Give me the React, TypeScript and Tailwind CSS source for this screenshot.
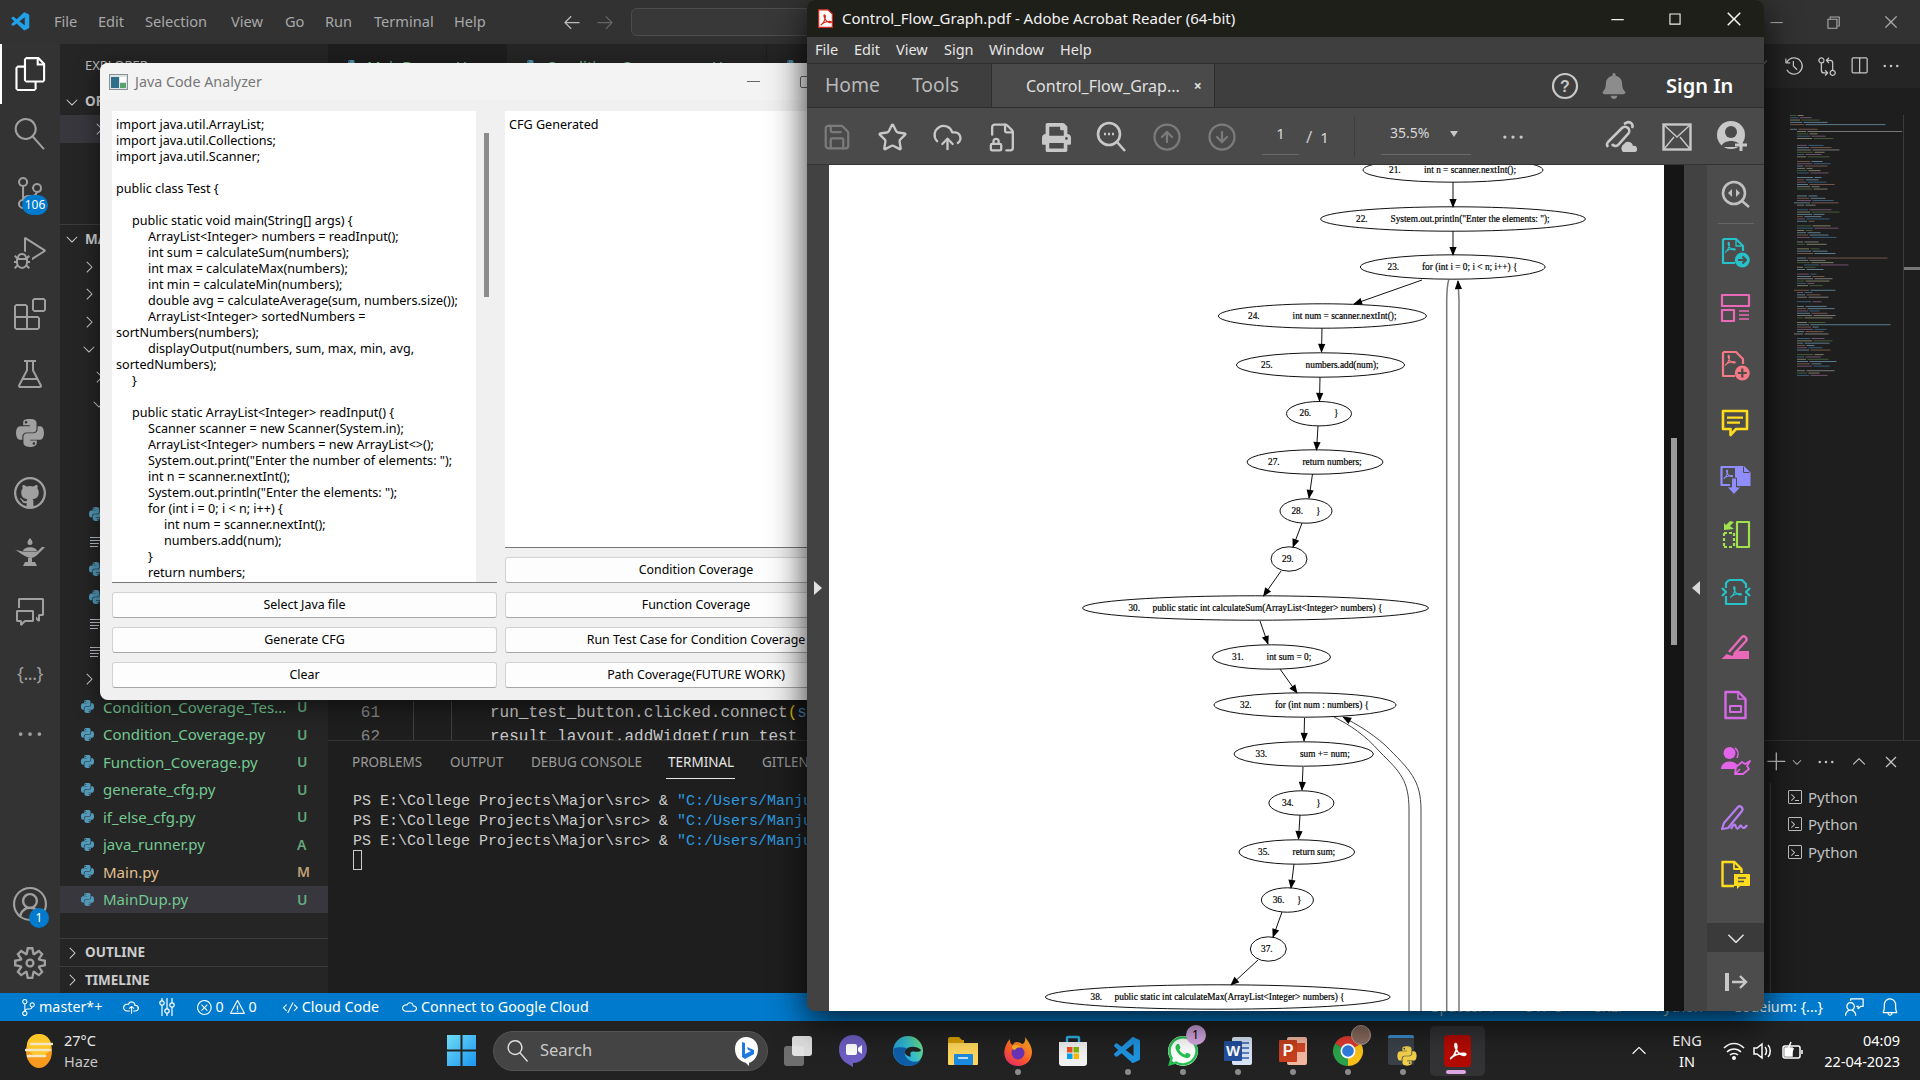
import type { ReactNode } from "react";
import {
  VscAccount, VscAdd, VscArrowLeft, VscArrowRight, VscBeaker, VscBell, VscChevronDown, VscChevronRight, VscChevronUp,
  VscChromeClose, VscChromeMaximize, VscChromeMinimize, VscChromeRestore, VscCheck, VscClose, VscCloud, VscCloudUpload, VscCode,
  VscCommentDiscussion, VscDebugAlt, VscEllipsis, VscError, VscExtensions, VscFeedback, VscFiles, VscGitCompare,
  VscGithub, VscHistory, VscListFlat, VscSearch, VscSettingsGear, VscSourceControl, VscSplitHorizontal,
  VscTerminal, VscVscode, VscWarning,
} from "react-icons/vsc";
import { FaBell, FaPrint, FaPython, FaWhatsapp } from "react-icons/fa";
import { CircleArrowDown, CircleArrowUp, CloudUpload, FileLock2, Save, Star } from "lucide-react";

const swoosh = "M4.5 19.5c2.5-1.5 5-6 6-10.5.4-2 .2-5-1-5s-1 3 0 5c1.5 3.5 5 7 8 7.5 1.5.3 3 0 3-1s-3-1.2-6-.7c-3 .5-7 2-9.5 4.2-1 1-1.2 1.8-.5.5z";

const javaLines: [number, string][] = [
  [0, "import java.util.ArrayList;"],
  [0, "import java.util.Collections;"],
  [0, "import java.util.Scanner;"],
  [0, " "],
  [0, "public class Test {"],
  [0, " "],
  [1, "public static void main(String[] args) {"],
  [2, "ArrayList<Integer> numbers = readInput();"],
  [2, "int sum = calculateSum(numbers);"],
  [2, "int max = calculateMax(numbers);"],
  [2, "int min = calculateMin(numbers);"],
  [2, "double avg = calculateAverage(sum, numbers.size());"],
  [2, "ArrayList<Integer> sortedNumbers ="],
  [0, "sortNumbers(numbers);"],
  [2, "displayOutput(numbers, sum, max, min, avg,"],
  [0, "sortedNumbers);"],
  [1, "}"],
  [0, " "],
  [1, "public static ArrayList<Integer> readInput() {"],
  [2, "Scanner scanner = new Scanner(System.in);"],
  [2, "ArrayList<Integer> numbers = new ArrayList<>();"],
  [2, 'System.out.print("Enter the number of elements: ");'],
  [2, "int n = scanner.nextInt();"],
  [2, 'System.out.println("Enter the elements: ");'],
  [2, "for (int i = 0; i < n; i++) {"],
  [3, "int num = scanner.nextInt();"],
  [3, "numbers.add(num);"],
  [2, "}"],
  [2, "return numbers;"],
];

// n, cx, cy, rx, numX, textX, text
const nodes: [number, number, number, number, number, number, string][] = [
  [21, 1453, 170, 90, 1389, 1424, "int n = scanner.nextInt();"],
  [22, 1453, 219, 132.4, 1356, 1390.5, 'System.out.println("Enter the elements: ");'],
  [23, 1452.7, 267, 92.4, 1387.5, 1422, "for (int i = 0; i < n; i++) {"],
  [24, 1322.4, 316, 104, 1248, 1292.6, "int num = scanner.nextInt();"],
  [25, 1320.5, 365, 84, 1261, 1305.6, "numbers.add(num);"],
  [26, 1319, 413.7, 32.5, 1299.5, 1334, "}"],
  [27, 1315, 462, 68, 1268, 1302.5, "return numbers;"],
  [28, 1306, 511, 26, 1291.4, 1316, "}"],
  [29, 1289, 559, 18, 1282, 1300, ""],
  [30, 1255.5, 608, 173, 1128.4, 1152.5, "public static int calculateSum(ArrayList<Integer> numbers) {"],
  [31, 1271.5, 657, 59, 1232, 1266.6, "int sum = 0;"],
  [32, 1305, 705, 91, 1240, 1275, "for (int num : numbers) {"],
  [33, 1303.7, 754, 69.7, 1255.5, 1300, "sum += num;"],
  [34, 1301.4, 803, 32.5, 1282, 1316.3, "}"],
  [35, 1296.8, 852, 57.8, 1258, 1292.6, "return sum;"],
  [36, 1287.4, 900, 26, 1272.7, 1297, "}"],
  [37, 1268.3, 949, 18, 1261, 1280, ""],
  [38, 1217.8, 997, 172.4, 1090.5, 1114.6, "public static int calculateMax(ArrayList<Integer> numbers) {"],
];

const edges: [number, number, number, number][] = [
  [1453, 182, 1453, 207], [1453, 231, 1453, 255], [1422, 280, 1354, 304], [1322, 328, 1321.5, 352],
  [1320, 377, 1319.5, 401], [1318, 426, 1316.5, 450], [1312.5, 474, 1309, 498], [1302, 523, 1293, 547],
  [1281, 571, 1263.5, 596], [1260, 621, 1268, 644], [1280, 669, 1297, 693], [1304.5, 718, 1304, 741],
  [1303, 767, 1302, 790], [1300, 815, 1298.5, 839], [1294, 864, 1291, 888], [1282, 912, 1273, 937], [1258, 960, 1231, 985],
];

const files: [string, string, string][] = [
  ["Condition_Coverage_Tes...", "U", "text-[#73c991]"],
  ["Condition_Coverage.py", "U", "text-[#73c991]"],
  ["Function_Coverage.py", "U", "text-[#73c991]"],
  ["generate_cfg.py", "U", "text-[#73c991]"],
  ["if_else_cfg.py", "U", "text-[#73c991]"],
  ["java_runner.py", "A", "text-[#73c991]"],
  ["Main.py", "M", "text-[#e2c08d]"],
  ["MainDup.py", "U", "text-[#73c991]"],
];

const treeRows = ["chev", "chev", "chev", "down", "chev2", "down2", "", "", "", "py", "list", "py", "py", "list", "list", "chev"];

function TreeRow({ kind }: { kind: string }) {
  return (
    <div className="h-[27.5px] flex items-center shrink-0">
      {kind === "chev" ? <VscChevronRight className="ml-[20px] text-[#ccc]" size={18} /> : null}
      {kind === "down" ? <VscChevronDown className="ml-[20px] text-[#ccc]" size={18} /> : null}
      {kind === "chev2" ? <VscChevronRight className="ml-[30px] text-[#ccc]" size={18} /> : null}
      {kind === "down2" ? <VscChevronDown className="ml-[30px] text-[#ccc]" size={18} /> : null}
      {kind === "py" ? <FaPython className="ml-[28px] text-[#519aba]" size={16} /> : null}
      {kind === "list" ? <VscListFlat className="ml-[28px] text-[#b8c0c8]" size={16} /> : null}
    </div>
  );
}

function Activity({ h, active, badge, children }: { h: string; active?: boolean; badge?: string; children: ReactNode }) {
  return (
    <div className={`${h} relative flex items-center justify-center text-[#a0a0a0] shrink-0 ${active ? "border-l-2 border-white text-white" : ""}`}>
      {children}
      {badge === "106" ? (
        <span className="absolute left-[22px] bottom-[8px] w-[26px] h-[20px] rounded-full bg-[#007acc] text-white text-[12px] leading-[20px] text-center">106</span>
      ) : null}
      {badge === "1" ? (
        <span className="absolute left-[29px] bottom-[5px] w-[20px] h-[20px] rounded-full bg-[#007acc] text-white text-[12px] leading-[20px] text-center">1</span>
      ) : null}
    </div>
  );
}

function Minimap() {
  const colors = ["#6a9955", "#569cd6", "#dcdcaa", "#9cdcfe", "#ce9178", "#c586c0", "#9cdcfe", "#d4d4d4"];
  const rows = [];
  for (let i = 0; i < 114; i++) {
    if (i % 7 === 5 || i % 23 === 11) continue;
    const indent = i < 7 ? 0 : i % 19 === 0 ? 4 : i % 31 === 3 ? 14 : 7;
    const w1 = 6 + ((i * 13) % 11);
    const w2 = 6 + ((i * 29) % 23);
    rows.push(
      <g key={i} opacity={0.55}>
        <rect x={indent} y={i * 2.3} width={w1} height={0.9} fill={colors[i % 8]} />
        <rect x={indent + w1 + 1.5} y={i * 2.3} width={i === 7 ? 95 : i % 29 === 4 ? 80 : w2} height={0.9} fill={colors[(i * 3 + 2) % 8]} />
      </g>
    );
  }
  return (
    <svg width="112" height="265" viewBox="0 0 112 265" className="block">
      {rows}
    </svg>
  );
}

function Btn({ children, w }: { children: string; w: string }) {
  return (
    <div className={`${w} h-[26px] shrink-0 bg-[#fdfdfd] border border-[#d2d2d2] border-b-[#a8a8a8] rounded-[3px] flex items-center justify-center text-[12.4px] text-black whitespace-nowrap`}>
      {children}
    </div>
  );
}

function ToolIcon({ children }: { children: ReactNode }) {
  return (
    <div className="h-[56.6px] flex items-center justify-center shrink-0">
      <svg width="32" height="32" viewBox="0 0 32 32" fill="none" strokeWidth="2.2" strokeLinejoin="round">
        {children}
      </svg>
    </div>
  );
}

function Taskbar({ dot, active, children }: { dot?: boolean; active?: boolean; children: ReactNode }) {
  return (
    <div className={`relative w-[55px] h-[50px] flex items-center justify-center shrink-0 rounded-[5px] ${active ? "bg-[#333336]" : ""}`}>
      {children}
      {dot ? <span className="absolute bottom-[1px] left-[25px] w-[6px] h-[6px] rounded-full bg-[#8b8b8b]" /> : null}
      {active ? <span className="absolute bottom-[2px] left-[16px] w-[20px] h-[4px] rounded-full bg-[#dca6e2]" /> : null}
    </div>
  );
}

export default function App() {
  return (
    <div className="relative w-[1920px] h-[1080px] overflow-hidden flex flex-col bg-[#1e1e1e] font-['Noto_Sans',sans-serif]">
      {/* vs code title bar */}
      <div className="h-[44px] shrink-0 bg-[#323233] flex items-center text-[14.6px] text-[#a8a8a8]">
        <VscVscode className="ml-[10px] text-[#23a0ea]" size={22} />
        <span className="ml-[22px] w-[44px]">File</span>
        <span className="w-[47px]">Edit</span>
        <span className="w-[86px]">Selection</span>
        <span className="w-[54px]">View</span>
        <span className="w-[40px]">Go</span>
        <span className="w-[49px]">Run</span>
        <span className="w-[80px]">Terminal</span>
        <span className="w-[106px]">Help</span>
        <VscArrowLeft className="text-[#bbb] ml-[2px]" size={20} />
        <VscArrowRight className="text-[#666] ml-[13px]" size={20} />
        <div className="ml-[16px] w-[520px] h-[28px] rounded-[6px] border border-[#4d4d4d] bg-[#383838]" />
        <div className="ml-auto flex items-center text-[#aaa]">
          <VscChromeMinimize size={18} className="mr-[39px]" />
          <VscChromeRestore size={18} className="mr-[40px]" />
          <VscChromeClose size={18} className="mr-[20px]" />
        </div>
      </div>

      <div className="flex-1 flex min-h-0">
        {/* activity bar */}
        <div className="w-[60px] shrink-0 bg-[#333333] flex flex-col">
          <Activity h="h-[60px]" active><VscFiles size={34} /></Activity>
          <Activity h="h-[59px]"><VscSearch size={32} className="-scale-x-100" /></Activity>
          <Activity h="h-[60px]" badge="106"><VscSourceControl size={32} /></Activity>
          <Activity h="h-[60px]"><VscDebugAlt size={32} /></Activity>
          <Activity h="h-[61px]"><VscExtensions size={32} /></Activity>
          <Activity h="h-[59px]"><VscBeaker size={32} /></Activity>
          <Activity h="h-[60px]"><FaPython size={32} /></Activity>
          <Activity h="h-[60px]"><VscGithub size={32} /></Activity>
          <Activity h="h-[59px]">
            <svg width="34" height="32" viewBox="0 0 34 32" fill="currentColor">
              <path d="M17 1c1.500 2 2.500 3 2.500 4.500a2.500 2.500 0 0 1-5 0C14.500 4 15.500 3 17 1z" />
              <path d="M10 14c1-5 13-5 14 0z" />
              <path d="M2 13c4 1 7 6 15 8 6 0 9-5 15-11h-3c-2 2-3 3-5 4.500H10C8 14.500 5 13 2 13z" />
              <path d="M15 21h4v4h-4zM12 25h10l2 4H10z" />
            </svg>
          </Activity>
          <Activity h="h-[60px]"><VscCommentDiscussion size={32} className="-scale-x-100" /></Activity>
          <Activity h="h-[62px]"><span className="text-[18px] tracking-tight">{"{...}"}</span></Activity>
          <Activity h="h-[59px]"><VscEllipsis size={30} /></Activity>
          <div className="flex-1" />
          <Activity h="h-[58px]" badge="1"><VscAccount size={34} /></Activity>
          <Activity h="h-[60px]"><VscSettingsGear size={32} /></Activity>
        </div>

        {/* sidebar */}
        <div className="w-[268px] shrink-0 bg-[#252526] flex flex-col text-[15px]">
          <div className="h-[44px] shrink-0 flex items-center pl-[25px] text-[13px] text-[#bbb]">EXPLORER</div>
          <div className="h-[27px] shrink-0 flex items-center pl-[3px] font-bold text-[13.5px] text-[#ccc]">
            <VscChevronDown size={18} /><span className="ml-[4px]">OPEN EDITORS</span>
          </div>
          <div className="h-[28px] shrink-0 flex items-center bg-[#37373d]"><VscChevronRight size={18} className="ml-[30px] text-[#ccc]" /></div>
          <div className="h-[82px] shrink-0 border-b border-[#3c3c3c]" />
          <div className="h-[28px] shrink-0 flex items-center pl-[3px] font-bold text-[13.5px] text-[#ccc]">
            <VscChevronDown size={18} /><span className="ml-[4px]">MAJOR</span>
          </div>
          {treeRows.map((kind, i) => <TreeRow key={i} kind={kind} />)}
          {files.map(([name, badge, color]) => (
            <div key={name} className={`h-[27.5px] shrink-0 flex items-center ${name === "MainDup.py" ? "bg-[#37373d]" : ""}`}>
              <FaPython className="ml-[20px] text-[#519aba]" size={15} />
              <span className={`ml-[8px] w-[194px] truncate ${color}`}>{name}</span>
              <span className={`font-semibold text-[14px] opacity-80 ${color}`}>{badge}</span>
            </div>
          ))}
          <div className="flex-1" />
          <div className="h-[28px] shrink-0 border-t border-[#3c3c3c] flex items-center pl-[3px] font-bold text-[13.5px] text-[#ccc]">
            <VscChevronRight size={18} /><span className="ml-[4px]">OUTLINE</span>
          </div>
          <div className="h-[27px] shrink-0 border-t border-[#3c3c3c] flex items-center pl-[3px] font-bold text-[13.5px] text-[#ccc]">
            <VscChevronRight size={18} /><span className="ml-[4px]">TIMELINE</span>
          </div>
        </div>

        {/* editor + panel */}
        <div className="flex-1 min-w-0 flex flex-col">
          <div className="h-[44px] shrink-0 bg-[#252526] flex text-[15px]">
            <div className="w-[178px] bg-[#1e1e1e] flex items-center pl-[16px] gap-[8px] text-[#73c991]">
              <FaPython className="text-[#519aba]" size={15} />MainDup.py U
            </div>
            <div className="w-[260px] flex items-center pl-[16px] gap-[8px] text-[#73c991] border-l border-[#1e1e1e]">
              <FaPython className="text-[#519aba]" size={15} />Condition_Coverage.py U
            </div>
            <div className="w-[200px] flex items-center pl-[16px] gap-[8px] text-[#e2c08d] border-l border-[#1e1e1e]">
              <FaPython className="text-[#519aba]" size={15} />Main.py
            </div>
            <div className="ml-auto flex items-center text-[#c5c5c5] pr-[19px]">
              <VscCheck size={18} className="mr-[15px] text-[#777]" />
              <VscHistory size={20} className="mr-[13px]" />
              <VscGitCompare size={20} className="mr-[12px]" />
              <VscSplitHorizontal size={20} className="mr-[12px]" />
              <VscEllipsis size={20} />
            </div>
          </div>
          <div className="h-[652px] shrink-0 flex bg-[#1e1e1e] overflow-hidden">
            <div className="flex-1 min-w-0 flex flex-col justify-end font-['Liberation_Mono',monospace] text-[16px] leading-[24px] text-[#c8c8c8]">
              <div className="flex h-[24px] whitespace-nowrap translate-y-[9px]">
                <span className="w-[52px] text-right text-[#858585]">61</span>
                <span className="ml-[33px] w-[38px] border-l border-[#404040] h-[24px]" />
                <span className="border-l border-[#404040] pl-[38px]">
                  run_test_button.clicked.connect<span className="text-[#ffd700]">(</span><span className="text-[#569cd6]">self.run_test)</span>
                </span>
              </div>
              <div className="flex h-[24px] whitespace-nowrap translate-y-[9px]">
                <span className="w-[52px] text-right text-[#858585]">62</span>
                <span className="ml-[33px] w-[38px] border-l border-[#404040] h-[24px]" />
                <span className="border-l border-[#404040] pl-[38px]">result_layout.addWidget(run_test_button)</span>
              </div>
            </div>
            <div className="w-[113px] shrink-0 pt-[27px]">
              <Minimap />
            </div>
            <div className="w-[17px] shrink-0 border-l border-[#3c3c3c] mt-[27px]">
              <div className="mt-[152px] h-[3px] bg-[#777]" />
            </div>
          </div>

          {/* panel */}
          <div className="flex-1 min-h-0 border-t border-[#333] bg-[#1e1e1e] flex flex-col">
            <div className="h-[42px] shrink-0 flex items-center text-[13.5px] text-[#9a9a9a] whitespace-nowrap">
              <span className="ml-[24px] w-[98px]">PROBLEMS</span>
              <span className="w-[81px]">OUTPUT</span>
              <span className="w-[137px]">DEBUG CONSOLE</span>
              <span className="w-[94px] h-[42px] leading-[42px] relative text-[#e7e7e7]">
                TERMINAL
                <span className="absolute left-[-2px] top-[37px] w-[69px] h-px bg-[#e7e7e7]" />
              </span>
              <span>GITLENS</span>
              <div className="ml-auto flex items-center text-[#c5c5c5] pr-[19px]">
                <VscAdd size={22} className="mr-[2px]" />
                <VscChevronDown size={14} className="mr-[12px]" />
                <VscEllipsis size={20} className="mr-[13px]" />
                <VscChevronUp size={20} className="mr-[12px]" />
                <VscClose size={20} />
              </div>
            </div>
            <div className="flex-1 min-h-0 flex">
              <div className="flex-1 min-w-0 pl-[25px] pt-[9px] font-['Liberation_Mono',monospace] text-[15px] leading-[20px] text-[#cccccc] whitespace-nowrap overflow-hidden">
                <div>PS E:\College Projects\Major\src&gt; &amp; <span className="text-[#2c9be0]">"C:/Users/Manjunath/AppData/Local/Programs/Python/Python310/python.exe"</span></div>
                <div>PS E:\College Projects\Major\src&gt; &amp; <span className="text-[#2c9be0]">"C:/Users/Manjunath/AppData/Local/Programs/Python/Python310/python.exe"</span></div>
                <div>PS E:\College Projects\Major\src&gt; &amp; <span className="text-[#2c9be0]">"C:/Users/Manjunath/AppData/Local/Programs/Python/Python310/python.exe"</span></div>
                <div className="w-[9px] h-[20px] -mt-[2px] border border-[#ccc]" />
              </div>
              <div className="w-[150px] shrink-0 border-l border-[#3c3c3c] pl-[16px] text-[15px] text-[#c0c0c0]">
                <div className="h-[27.5px] flex items-center gap-[5px]"><VscTerminal size={16} />Python</div>
                <div className="h-[27.5px] flex items-center gap-[5px]"><VscTerminal size={16} />Python</div>
                <div className="h-[27.5px] flex items-center gap-[5px]"><VscTerminal size={16} />Python</div>
              </div>
            </div>
          </div>
        </div>
      </div>

      {/* status bar */}
      <div className="h-[28px] shrink-0 bg-[#007acc] flex items-center text-white text-[14.3px] whitespace-nowrap">
        <VscSourceControl size={17} className="ml-[20px]" /><span className="ml-[2px]">master*+</span>
        <VscCloudUpload size={18} className="ml-[20px]" />
        <svg width="18" height="20" viewBox="0 0 18 20" fill="none" stroke="#fff" strokeWidth="1.2" className="ml-[18px]">
          <path d="M4 1v18M9 1v18M14 1v18" /><circle cx="4" cy="6" r="2.200" fill="#007acc" /><circle cx="9" cy="14" r="2.200" fill="#007acc" /><circle cx="14" cy="8" r="2.200" fill="#007acc" />
        </svg>
        <VscError size={17} className="ml-[20px]" /><span className="ml-[2px]">0</span>
        <VscWarning size={17} className="ml-[5px]" /><span className="ml-[3px]">0</span>
        <VscCode size={17} className="ml-[25px]" /><span className="ml-[3px]">Cloud Code</span>
        <VscCloud size={17} className="ml-[22px]" /><span className="ml-[3px]">Connect to Google Cloud</span>
        <div className="ml-auto flex items-center pr-[20px]">
          <span className="mr-[30px] text-[#c8e0f0]">Spaces: 4</span>
          <span className="mr-[30px] text-[#c8e0f0]">UTF-8</span>
          <span className="mr-[30px] text-[#c8e0f0]">CRLF</span>
          <span className="mr-[30px] text-[#c8e0f0]">Python</span>
          <span className="mr-[22px]">Codeium: {"{...}"}</span>
          <VscFeedback size={20} className="mr-[15px]" />
          <VscBell size={20} />
        </div>
      </div>

      {/* windows taskbar */}
      <div className="h-[59px] shrink-0 bg-[#222222] flex items-center text-white">
        <div className="w-[447px] shrink-0 flex items-center">
          <svg width="28" height="36" viewBox="0 0 28 36" className="ml-[25px]">
            <ellipse cx="14" cy="18" rx="13" ry="17" fill="#f79a1e" />
            <ellipse cx="14" cy="12" rx="12" ry="11" fill="#ffc629" />
            <g stroke="#f3e6c4" strokeWidth="2.6" strokeLinecap="round"><path d="M6 11h21M1 17h24M3 23h17" /></g>
          </svg>
          <div className="ml-[11px] text-[14.5px] leading-[21px] text-[#e8e8e8]">
            <div>27°C</div><div className="text-[#c8c8c8]">Haze</div>
          </div>
        </div>
        <svg width="29" height="31" viewBox="0 0 29 31" className="shrink-0">
          <defs><linearGradient id="win" x1="0" y1="0" x2="1" y2="1"><stop offset="0" stopColor="#6fdcf5" /><stop offset="1" stopColor="#1a95f0" /></linearGradient></defs>
          <path d="M0 0h13.5v14.5H0zM15.5 0H29v14.5H15.500zM0 16.5h13.5V31H0zM15.5 16.5H29V31H15.500z" fill="url(#win)" />
        </svg>
        <div className="ml-[17px] w-[275px] h-[40px] shrink-0 rounded-full bg-[#444444] border border-[#555] flex items-center">
          <VscSearch size={22} className="ml-[13px] -scale-x-100 text-[#ddd]" />
          <span className="ml-[11px] text-[16.5px] text-[#c8c8c8]">Search</span>
          <svg width="26" height="32" viewBox="0 0 26 32" className="ml-auto mr-[8px]">
            <path d="M13 2C6 2 2 8 2 14c0 7 4 12 11 14l3 3v-3c6-2 9-8 9-14C25 7 20 2 13 2z" fill="#fff" />
            <path d="M9 7l3 1v11l6-3-3-1-1-3 7 3v4l-9 5-3-2z" fill="#1f7ae0" />
          </svg>
        </div>
        <div className="ml-[2px] flex items-center">
          <Taskbar>
            <div className="relative w-[28px] h-[30px]">
              <div className="absolute left-0 bottom-0 w-[20px] h-[20px] rounded-[3px] bg-[#6f6f6f]" />
              <div className="absolute right-0 top-0 w-[20px] h-[20px] rounded-[3px] bg-[#f2f2f2] opacity-90" />
            </div>
          </Taskbar>
          <Taskbar>
            <svg width="30" height="34" viewBox="0 0 30 34">
              <path d="M15 1C7 1 1 7 1 15c0 7 3 12 9 15l5 3v-4c8 0 14-6 14-14S23 1 15 1z" fill="#6d5fc4" />
              <rect x="8" y="10" width="11" height="11" rx="2" fill="#fff" /><path d="M20 14l4-3v9l-4-3z" fill="#fff" />
            </svg>
          </Taskbar>
          <Taskbar>
            <svg width="32" height="32" viewBox="0 0 32 32">
              <defs>
                <linearGradient id="edge" x1="0" y1="0.7" x2="1" y2="0.2"><stop offset="0" stopColor="#1f90d8" /><stop offset="0.55" stopColor="#35bfd0" /><stop offset="1" stopColor="#6fe07a" /></linearGradient>
              </defs>
              <circle cx="16" cy="16" r="15" fill="url(#edge)" />
              <path d="M1.500 14c-1 10 6.500 17 15.500 17 5 0 9-2 12-6-5 3-12 2-15-3-2-3-1-7 1-9-5-1-12-1-13.500 1z" fill="#0f5ea8" />
              <path d="M13 16c2-5 11-6 16-1 0 3-6 1-9 1.500-2 .5-2 3-1 5-3 0-7-2-6-5.500z" fill="#222" />
            </svg>
          </Taskbar>
          <Taskbar>
            <svg width="32" height="30" viewBox="0 0 32 30">
              <path d="M1 3a2 2 0 0 1 2-2h9l3 3h2v6H1z" fill="#d9a200" />
              <path d="M1 7h30v21a1 1 0 0 1-1 1H2a1 1 0 0 1-1-1z" fill="#ffd75e" />
              <rect x="7" y="18" width="19" height="11" rx="1" fill="#1c8be0" /><rect x="11" y="21" width="10" height="2" fill="#bfe0f7" />
            </svg>
          </Taskbar>
          <Taskbar dot>
            <svg width="30" height="32" viewBox="0 0 30 32">
              <defs><linearGradient id="fx" x1="0.8" y1="0" x2="0.2" y2="1"><stop offset="0" stopColor="#ffb21f" /><stop offset="0.6" stopColor="#ff5a2a" /><stop offset="1" stopColor="#e22a6b" /></linearGradient></defs>
              <path d="M2 13c-3 10 4 18 13 18s14-7 14-14c0-6-4-11-7-15 1 5-2 7-3 7-2-2-6-3-8-1-1 1-1 2-1 2-3-1-3-4-3-6-2 2-4 5-5 9z" fill="url(#fx)" />
              <circle cx="15" cy="18" r="6.500" fill="#6b34b8" />
              <path d="M9 11c3-2 8-1 9 2-3-1-5 0-6 2-2 0-3-2-3-4z" fill="#ffb21f" />
            </svg>
          </Taskbar>
          <Taskbar>
            <svg width="30" height="32" viewBox="0 0 30 32">
              <path d="M9 8V3a1 1 0 0 1 1-1h10a1 1 0 0 1 1 1v5" fill="none" stroke="#2fb2e8" strokeWidth="2.4" />
              <path d="M1 7h28v21a3 3 0 0 1-3 3H4a3 3 0 0 1-3-3z" fill="#f2f2f2" />
              <rect x="9" y="12" width="5.500" height="5.500" fill="#f25022" /><rect x="15.500" y="12" width="5.500" height="5.500" fill="#7fba00" />
              <rect x="9" y="18.500" width="5.500" height="5.500" fill="#00a4ef" /><rect x="15.500" y="18.500" width="5.500" height="5.500" fill="#ffb900" />
            </svg>
          </Taskbar>
          <Taskbar dot><VscVscode size={32} className="text-[#1f93e0]" /></Taskbar>
          <Taskbar dot>
            <div className="relative">
              <div className="w-[30px] h-[30px] rounded-full bg-white flex items-center justify-center"><FaWhatsapp size={34} className="text-[#25c350] shrink-0" /></div>
              <span className="absolute -right-[8px] -top-[11px] w-[20px] h-[20px] rounded-full bg-[#d7a9e3] text-black text-[12px] leading-[20px] text-center">1</span>
            </div>
          </Taskbar>
          <Taskbar dot>
            <svg width="30" height="30" viewBox="0 0 30 30">
              <rect x="9" y="1" width="20" height="28" rx="2" fill="#d8e4f5" />
              <g stroke="#2b5fb3" strokeWidth="1.6"><path d="M18 7h8M18 12h8M18 17h8M18 22h8" /></g>
              <rect x="1" y="5" width="18" height="20" rx="1" fill="#234f9c" />
              <text x="10" y="20" textAnchor="middle" fontSize="15" fontWeight="700" fontFamily="Liberation Sans" fill="#fff">W</text>
            </svg>
          </Taskbar>
          <Taskbar dot>
            <svg width="30" height="30" viewBox="0 0 30 30">
              <rect x="9" y="1" width="20" height="28" rx="2" fill="#f3b7a0" />
              <rect x="18" y="7" width="9" height="9" fill="#d24726" />
              <rect x="1" y="4" width="18" height="22" rx="1" fill="#c6401f" />
              <text x="10" y="20" textAnchor="middle" fontSize="16" fontWeight="700" fontFamily="Liberation Sans" fill="#fff">P</text>
            </svg>
          </Taskbar>
          <Taskbar dot>
            <div className="relative">
              <svg width="32" height="32" viewBox="0 0 32 32">
                <path d="M16 16L3 8.500A15 15 0 0 1 29 8.500z" fill="#e33b2e" />
                <path d="M16 16L29 8.500A15 15 0 0 1 16 31z" fill="#fbc116" />
                <path d="M16 16L16 31A15 15 0 0 1 3 8.500z" fill="#2ca24c" />
                <circle cx="16" cy="16" r="7.500" fill="#fff" /><circle cx="16" cy="16" r="5.800" fill="#2f7de1" />
              </svg>
              <span className="absolute -right-[7px] -top-[10px] w-[20px] h-[20px] rounded-full bg-[#8a6d60] border border-[#b8a59a]" />
            </div>
          </Taskbar>
          <Taskbar dot>
            <div className="relative w-[30px] h-[32px]">
              <div className="w-[26px] h-[30px] rounded-[2px] bg-[#3a4148] border-t-[3px] border-[#3b8ed0]" />
              <FaPython size={22} className="absolute right-0 bottom-0 text-[#f2d04a]" />
            </div>
          </Taskbar>
          <Taskbar active>
            <div className="w-[27px] h-[32px] rounded-[4px] bg-[#b30b00] flex items-center justify-center">
              <svg width="22" height="22" viewBox="0 0 24 24" fill="none" stroke="#fff" strokeWidth="2"><path d={swoosh} /></svg>
            </div>
          </Taskbar>
        </div>
        <div className="ml-auto pr-[20px] flex items-center">
          <div className="w-[30px] flex justify-center"><VscChevronUp size={22} /></div>
          <div className="w-[66px] text-center text-[14.5px] leading-[21px]"><div>ENG</div><div>IN</div></div>
          <svg width="22" height="20" viewBox="0 0 22 20" fill="none" stroke="#fff" strokeWidth="1.6" className="mx-[3px]">
            <path d="M1 7c6-6 14-6 20 0M4 11c4-4 10-4 14 0M7 14c2-2 6-2 8 0" /><circle cx="11" cy="17" r="1.200" fill="#fff" />
          </svg>
          <svg width="20" height="20" viewBox="0 0 20 20" fill="none" stroke="#fff" strokeWidth="1.5" className="mx-[4px]">
            <path d="M2 7h3l5-4v14l-5-4H2zM13 6c2 2 2 6 0 8M16 4c3 3 3 9 0 12" />
          </svg>
          <svg width="22" height="20" viewBox="0 0 22 20" fill="none" stroke="#fff" strokeWidth="1.5" className="mx-[6px]">
            <rect x="1" y="5" width="17" height="12" rx="2" /><path d="M20 9v4" /><rect x="3" y="7" width="7" height="8" fill="#fff" /><path d="M9 1l-3 7h5l-3 7" />
          </svg>
          <div className="w-[90px] text-right text-[14.5px] leading-[21px]"><div>04:09</div><div>22-04-2023</div></div>
        </div>
      </div>

      {/* java window */}
      <div className="absolute left-[100px] top-[63px] w-[799px] h-[637px] rounded-[8px] bg-[#f0f0f0] shadow-[0_6px_24px_rgba(0,0,0,0.5)] flex flex-col overflow-hidden">
        <div className="h-[37px] shrink-0 bg-[#f3f3f3] flex items-center">
          <svg width="19" height="16" viewBox="0 0 19 16" className="ml-[9px] shrink-0">
            <rect x=".5" y=".5" width="18" height="15" fill="#dfe3e6" stroke="#8a9096" />
            <rect x="2" y="3" width="8" height="11" fill="#2d6f88" /><rect x="11" y="3" width="6" height="5" fill="#fff" /><rect x="11" y="9" width="6" height="5" fill="#53a36b" />
          </svg>
          <span className="ml-[7px] text-[14.3px] text-[#777]">Java Code Analyzer</span>
          <span className="ml-auto w-[13px] h-px bg-[#666]" />
          <span className="ml-[40px] mr-[87px] w-[12px] h-[12px] border border-[#666] rounded-[2px]" />
        </div>
        <div className="flex-1 flex pl-[12px] pt-[11px] gap-[8px]">
          <div className="w-[385px] flex flex-col gap-[9px]">
            <div className="h-[472px] flex border-b border-[#777] overflow-hidden">
              <div className="w-[364px] bg-white px-[4px] pt-[6px] text-[12.6px] leading-[16px] text-black whitespace-pre">
                {javaLines.map(([lvl, text], i) => (
                  <div key={i} className={lvl === 1 ? "pl-[16px]" : lvl === 2 ? "pl-[32px]" : lvl === 3 ? "pl-[48px]" : ""}>{text}</div>
                ))}
              </div>
              <div className="flex-1">
                <div className="mt-[22px] ml-[8px] w-[5px] h-[164px] bg-[#8c8c8c]" />
              </div>
            </div>
            <Btn w="w-[385px]">Select Java file</Btn>
            <Btn w="w-[385px]">Generate CFG</Btn>
            <Btn w="w-[385px]">Clear</Btn>
          </div>
          <div className="w-[382px] flex flex-col gap-[9px]">
            <div className="h-[437px] bg-white border-b border-[#777] px-[4px] pt-[6px] text-[12.6px] leading-[16px] text-black">CFG Generated</div>
            <Btn w="w-[382px]">Condition Coverage</Btn>
            <Btn w="w-[382px]">Function Coverage</Btn>
            <Btn w="w-[382px]">Run Test Case for Condition Coverage</Btn>
            <Btn w="w-[382px]">Path Coverage(FUTURE WORK)</Btn>
          </div>
        </div>
      </div>

      {/* acrobat window */}
      <div className="absolute left-[807px] top-0 w-[957px] h-[1011px] rounded-[8px] bg-[#4a4a4a] shadow-[0_10px_36px_rgba(0,0,0,0.8)] flex flex-col overflow-hidden">
        <div className="h-[37px] shrink-0 bg-[#1f1f1a] flex items-center text-[#f2f2f2]">
          <svg width="15" height="19" viewBox="0 0 24 30" className="ml-[11px] shrink-0">
            <path d="M1 1h15l7 7v21H1z" fill="#fff" stroke="#d8271c" strokeWidth="2" />
            <path d={swoosh} transform="translate(1 5)" fill="none" stroke="#d8271c" strokeWidth="2" />
          </svg>
          <span className="ml-[9px] text-[15px]">Control_Flow_Graph.pdf - Adobe Acrobat Reader (64-bit)</span>
          <div className="ml-auto flex items-center">
            <VscChromeMinimize size={18} className="mr-[40px]" />
            <VscChromeMaximize size={18} className="mr-[40px]" />
            <VscChromeClose size={20} className="mr-[20px]" />
          </div>
        </div>
        <div className="h-[26px] shrink-0 bg-[#3f3f3f] flex items-center text-[14.5px] text-[#e6e6e6]">
          <span className="ml-[8px] w-[39px]">File</span>
          <span className="w-[42px]">Edit</span>
          <span className="w-[48px]">View</span>
          <span className="w-[45px]">Sign</span>
          <span className="w-[71px]">Window</span>
          <span>Help</span>
        </div>
        <div className="h-[44px] shrink-0 bg-[#3e3e3e] border-t border-[#2e2e2e] flex items-center">
          <span className="ml-[18px] w-[87px] text-[19.3px] text-[#b9b9b9]">Home</span>
          <span className="w-[79px] text-[19.3px] text-[#b9b9b9]">Tools</span>
          <div className="h-[44px] w-[224px] bg-[#4a4a4a] border-x border-[#2e2e2e] flex items-center text-[16px] text-[#e0e0e0] pl-[34px] whitespace-nowrap">
            Control_Flow_Grap...<span className="ml-[14px] text-[14px] font-bold">×</span>
          </div>
          <svg width="28" height="28" viewBox="0 0 28 28" fill="none" stroke="#c8c8c8" strokeWidth="2.2" className="ml-[336px]">
            <circle cx="14" cy="14" r="12" />
            <text x="14" y="20" textAnchor="middle" fontSize="16" fontWeight="700" stroke="none" fill="#c8c8c8" fontFamily="Liberation Sans">?</text>
          </svg>
          <FaBell size={26} className="ml-[22px] text-[#8c8c8c]" />
          <span className="ml-[39px] text-[20px] font-semibold text-white">Sign In</span>
        </div>
        <div className="h-[58px] shrink-0 bg-[#4a4a4a] border-t border-[#2e2e2e] border-b border-b-[#333] pt-[2px] flex items-center text-[#c8c8c8]">
          <Save size={30} strokeWidth={1.8} className="ml-[15px] text-[#7b7b7b]" />
          <Star size={31} strokeWidth={1.8} className="ml-[25px]" />
          <CloudUpload size={31} strokeWidth={1.8} className="ml-[24px]" />
          <FileLock2 size={31} strokeWidth={1.8} className="ml-[24px]" />
          <FaPrint size={29} className="ml-[24px]" />
          <svg width="31" height="32" viewBox="0 0 31 32" fill="none" stroke="#c8c8c8" strokeWidth="2.6" className="ml-[25px]">
            <circle cx="13" cy="13" r="11" /><path d="M21 21l8 9" /><path d="M8 13h2M12 13h2M16 13h2" />
          </svg>
          <CircleArrowUp size={30} strokeWidth={1.8} className="ml-[25px] text-[#7b7b7b]" />
          <CircleArrowDown size={30} strokeWidth={1.8} className="ml-[25px] text-[#7b7b7b]" />
          <div className="ml-[25px] w-[37px] h-[36px] border-b border-[#6a6a6a] text-center text-[15px] leading-[28px] text-[#d8d8d8]">1</div>
          <span className="ml-[7px] text-[17px]">/</span>
          <span className="ml-[8px] text-[15px] text-[#d8d8d8]">1</span>
          <span className="ml-[25px] w-px h-[40px] bg-[#3c3c3c]" />
          <div className="ml-[26px] w-[90px] h-[36px] border-b border-[#6a6a6a] flex items-start pt-[3px] pl-[9px] text-[14px] text-[#d8d8d8]">
            35.5%<span className="ml-[21px] mt-[9px] w-0 h-0 border-x-[4px] border-x-transparent border-t-[6px] border-t-[#c8c8c8]" />
          </div>
          <VscEllipsis size={26} className="ml-[29px]" />
          <svg width="32" height="34" viewBox="0 0 32 34" fill="none" stroke="#c8c8c8" strokeWidth="2.6" className="ml-[79px]">
            <path d="M3 22l14-14a4 4 0 0 1 6 6l-10 11a4 4 0 0 1-6-1M19 4l2-1a4 4 0 0 1 6 5M3 22a4 4 0 0 0 0 5" />
            <path d="M18 32a5 5 0 0 1 1-8 5 5 0 0 1 9 2 3 3 0 0 1 2 6z" fill="#c8c8c8" stroke="none" />
          </svg>
          <svg width="30" height="28" viewBox="0 0 30 28" fill="none" stroke="#c8c8c8" strokeWidth="2.4" className="ml-[25px]">
            <rect x="1.5" y="1.5" width="27" height="25" /><path d="M2 2l13 12L28 2M2 26l10-12M28 26L18 14" strokeWidth="1.4" />
          </svg>
          <svg width="32" height="34" viewBox="0 0 32 34" className="ml-[25px]">
            <circle cx="14" cy="15" r="14" fill="#c8c8c8" />
            <circle cx="14" cy="12" r="6" fill="#4a4a4a" /><path d="M4 27c2-8 18-8 20 0z" fill="#4a4a4a" />
            <path d="M24 19v12M18 25h12" stroke="#c8c8c8" strokeWidth="3" />
          </svg>
        </div>
        <div className="flex-1 min-h-0 flex">
          <div className="w-[22px] shrink-0 bg-[#424242] flex items-center justify-center">
            <span className="w-0 h-0 border-y-[7px] border-y-transparent border-l-[8px] border-l-[#e0e0e0]" />
          </div>
          <div className="w-[835px] shrink-0 bg-white overflow-hidden">
            <svg width="835" height="846" viewBox="829 165 835 846" className="block">
              <defs>
                <marker id="arrow" viewBox="0 0 10 10" refX="9" refY="5" markerWidth="11" markerHeight="9" markerUnits="userSpaceOnUse" orient="auto">
                  <path d="M0 1L10 5L0 9z" fill="#000" />
                </marker>
              </defs>
              {edges.map(([x1, y1, x2, y2], i) => (
                <line key={i} x1={x1} y1={y1} x2={x2} y2={y2} stroke="#111" strokeWidth="1" markerEnd="url(#arrow)" />
              ))}
              <path d="M1446.7 1011V300Q1447 285 1448.7 280" fill="none" stroke="#777" strokeWidth="1.5" />
              <path d="M1459 1011V300L1458 281" fill="none" stroke="#777" strokeWidth="1.5" markerEnd="url(#arrow)" />
              <path d="M1334 717C1350 725 1365 735 1380 752C1400 772 1409 780 1409 810V1011" fill="none" stroke="#444" strokeWidth="1" />
              <path d="M1421 1011V810C1421 780 1410 770 1385 745C1370 732 1358 725 1343 717" fill="none" stroke="#444" strokeWidth="1" markerEnd="url(#arrow)" />
              {nodes.map(([n, cx, cy, rx, numX, textX, text]) => (
                <g key={n}>
                  <ellipse cx={cx} cy={cy} rx={rx} ry={12.2} fill="none" stroke="#111" strokeWidth="1" />
                  <text x={numX} y={cy + 2.5} fontSize="9.3" fontFamily="Liberation Serif, serif" fill="#000" stroke="#000" strokeWidth="0.2">{n}.</text>
                  <text x={textX} y={cy + 2.5} fontSize="9.3" fontFamily="Liberation Serif, serif" fill="#000" stroke="#000" strokeWidth="0.2">{text}</text>
                </g>
              ))}
            </svg>
          </div>
          <div className="w-[20px] shrink-0 bg-[#151515]">
            <div className="mt-[273px] ml-[7px] w-[6px] h-[207px] bg-[#9a9a9a]" />
          </div>
          <div className="w-[23px] shrink-0 bg-[#424242] flex items-center justify-center">
            <span className="w-0 h-0 border-y-[7px] border-y-transparent border-r-[8px] border-r-[#d8d8d8]" />
          </div>
          <div className="w-[57px] shrink-0 bg-[#4c4c4c] flex flex-col">
            <div className="h-[58px] shrink-0 flex items-center justify-center">
              <svg width="30" height="28" viewBox="0 0 30 28" fill="none" stroke="#c0c0c0" strokeWidth="2.6">
                <circle cx="13" cy="13" r="11" /><path d="M21 21l7 6" />
                <path d="M11 9l-4 4 4 4zM15 9l4 4-4 4z" fill="#c0c0c0" stroke="none" />
              </svg>
            </div>
            <div className="h-px w-[36px] mx-auto bg-[#666]" />
            {/* export pdf */}
            <ToolIcon>
              <g stroke="#26c1c9"><path d="M3 3h13l7 7v5M3 3v24h12" /><path d="M16 3v7h7" strokeWidth="1.4" /><path d={swoosh} transform="translate(3 4) scale(.6)" strokeWidth="2" /></g>
              <circle cx="22.3" cy="24" r="7.5" fill="#26c1c9" /><path d="M18 24h7M22.500 20.500l3.500 3.500-3.500 3.500" stroke="#4c4c4c" strokeWidth="2" />
            </ToolIcon>
            {/* layout */}
            <ToolIcon>
              <g stroke="#ea68b8"><rect x="2" y="2" width="27" height="11" /><rect x="2" y="17" width="12" height="11" /><path d="M19 18h10M19 22h10M19 26h10" strokeWidth="1.4" /></g>
            </ToolIcon>
            {/* create pdf */}
            <ToolIcon>
              <g stroke="#f47a85"><path d="M3 3h13l7 7v5M3 3v24h12" /><path d={swoosh} transform="translate(3 4) scale(.6)" strokeWidth="2" /></g>
              <circle cx="22.3" cy="24" r="7.5" fill="#f47a85" /><path d="M17.800 24h9M22.300 19.500v9" stroke="#4c4c4c" strokeWidth="2.2" />
            </ToolIcon>
            {/* comment */}
            <ToolIcon>
              <path d="M3 5h24v18H16l-5.500 6v-6H3z" stroke="#ffdc1e" strokeWidth="2.6" /><path d="M7 11.700h16M7 16.700h13" stroke="#ffdc1e" strokeWidth="2.2" />
            </ToolIcon>
            {/* combine */}
            <ToolIcon>
              <path d="M15 4H1.500v18H10" stroke="#8f8dfb" strokeWidth="2.2" />
              <path d={swoosh} transform="translate(2 5) scale(.52)" stroke="#8f8dfb" strokeWidth="2" />
              <path d="M15 3h9l6.500 6.500V23H15z" fill="#8f8dfb" stroke="none" />
              <path d="M23.500 3.500v6h6" stroke="#4c4c4c" strokeWidth="1" />
              <path d="M11.500 15h5v9H21l-7 7.500L7 24h4.500z" fill="#8f8dfb" stroke="#4c4c4c" strokeWidth="1" />
            </ToolIcon>
            {/* organize */}
            <ToolIcon>
              <rect x="17" y="3" width="12" height="25" stroke="#9fe24e" />
              <path d="M4 14h10M4 28h10M4 14v14M14 14v14" stroke="#9fe24e" strokeWidth="2.2" strokeDasharray="3 2" />
              <path d="M14 3l-4 4 4 3-10 1 0-7 2 2 4-4z" fill="#9fe24e" stroke="none" />
            </ToolIcon>
            {/* compress */}
            <ToolIcon>
              <g stroke="#26c1c9"><path d="M9 4h13l4 4v4M26 20v8H6v-8M6 12V7l3-3" strokeWidth="2.2" /><path d={swoosh} transform="translate(8 8) scale(.66)" strokeWidth="1.8" /><path d="M2 12l4 4-4 4M30 12l-4 4 4 4" strokeWidth="2.4" /></g>
            </ToolIcon>
            {/* redact */}
            <ToolIcon>
              <path d="M9 20L22 5c2-2 6 1 4 4L14 22" stroke="#ea68b8" strokeWidth="2.4" />
              <path d="M15 19h14v8H1.500l5-5 6 2z" fill="#ea68b8" stroke="none" />
            </ToolIcon>
            {/* form */}
            <ToolIcon>
              <path d="M5.500 3h13l7 7v19h-20z" stroke="#d66ae6" strokeWidth="2.4" /><path d="M18 3v7h7" stroke="#d66ae6" strokeWidth="1.6" /><rect x="10" y="17" width="11" height="6" stroke="#d66ae6" strokeWidth="2" />
            </ToolIcon>
            {/* sign people */}
            <ToolIcon>
              <circle cx="9.500" cy="7" r="6" fill="#e264e8" stroke="none" /><path d="M1 23c0-10 17-10 18 0z" fill="#e264e8" stroke="none" />
              <path d="M15 2c3 2 4 6 2 10" stroke="#e264e8" strokeWidth="1.6" />
              <path d="M15 28l1-7 6-5 3 2 5-3-3 5 2 3-6 5z" stroke="#e264e8" strokeWidth="1.8" fill="#4c4c4c" /><path d="M15 28l5-5" stroke="#e264e8" strokeWidth="1.4" />
            </ToolIcon>
            {/* fill sign */}
            <ToolIcon>
              <path d="M2 27l2-6L18 5c2-2 6 1 4 4L8 26z" stroke="#b87df2" strokeWidth="2.2" /><path d="M11 27c2-5 4-6 5-2 1 3 3 1 4-1s2 2 3 2 3-1 4-3" stroke="#b87df2" strokeWidth="2.2" />
            </ToolIcon>
            {/* send comments */}
            <ToolIcon>
              <path d="M14 27H2.500V3h12l7 7v4" stroke="#ffdc1e" strokeWidth="2.4" /><path d="M14 3v7h7" stroke="#ffdc1e" strokeWidth="1.8" />
              <path d="M14 15h15a1 1 0 0 1 1 1v10a1 1 0 0 1-1 1h-9l-3 3v-3h-3z" fill="#ffdc1e" stroke="none" /><path d="M18 19h8M18 22.500h6" stroke="#4c4c4c" strokeWidth="1.4" />
            </ToolIcon>
            <div className="flex-1" />
            <div className="h-[29px] shrink-0 bg-[#3a3a3a] flex items-center justify-center text-[#e0e0e0]"><VscChevronDown size={26} /></div>
            <div className="h-[59px] shrink-0 flex items-center justify-center">
              <svg width="24" height="22" viewBox="0 0 24 22" fill="none" stroke="#c8c8c8" strokeWidth="2.4"><path d="M3 2v18" strokeWidth="4" /><path d="M8 11h14M16 5l6 6-6 6" /></svg>
            </div>
          </div>
        </div>
      </div>
    </div>
  );
}
